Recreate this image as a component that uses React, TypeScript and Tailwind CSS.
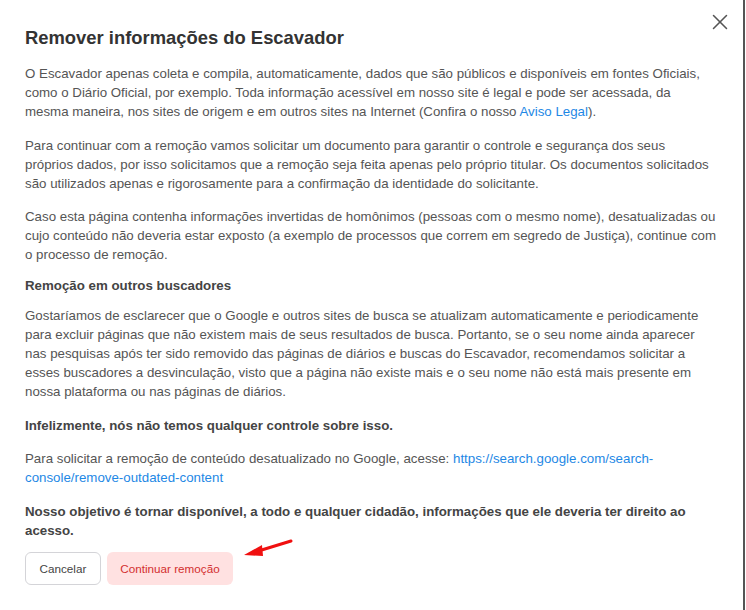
import { X } from "lucide-react";

const Modal = () => {
  return (
    <div className="relative h-[610px] w-[746px] overflow-hidden bg-white font-['Liberation_Sans',Arial,sans-serif]">
      <div className="absolute right-[1px] top-0 h-full w-[2px] bg-[#555]" />
      <button className="absolute right-[13px] top-[9px] text-[#555]">
        <X size={26} strokeWidth={1.4} />
      </button>
      <div className="pl-[25px] pt-[26px] pr-[30px]">
        <h2 className="text-[18.4px] font-bold leading-[23px] text-[#333]">
          Remover informações do Escavador
        </h2>
        <div className="mt-[15px] text-[13.3px] leading-[19px] text-[#555]">
          <p className="mb-[14.5px]">
            O Escavador apenas coleta e compila, automaticamente, dados que são
            públicos e disponíveis em fontes Oficiais, como o Diário Oficial,
            por exemplo. Toda informação acessível em nosso site é legal e pode
            ser acessada, da mesma maneira, nos sites de origem e em outros
            sites na Internet (Confira o nosso{" "}
            <a className="text-[#1e88e5]">Aviso Legal</a>).
          </p>
          <p className="mb-[14.5px]">
            Para continuar com a remoção vamos solicitar um documento para
            garantir o controle e segurança dos seus próprios dados, por isso
            solicitamos que a remoção seja feita apenas pelo próprio titular. Os
            documentos solicitados são utilizados apenas e rigorosamente para a
            confirmação da identidade do solicitante.
          </p>
          <p className="mr-[-3px] mb-[12px]">
            Caso esta página contenha informações invertidas de homônimos
            (pessoas com o mesmo nome), desatualizadas ou cujo conteúdo não
            deveria estar exposto (a exemplo de processos que correm em segredo
            de Justiça), continue com o processo de remoção.
          </p>
          <p className="mb-[11px] font-bold text-[#444]">
            Remoção em outros buscadores
          </p>
          <p className="mb-[14.5px]">
            Gostaríamos de esclarecer que o Google e outros sites de busca se
            atualizam automaticamente e periodicamente para excluir páginas que
            não existem mais de seus resultados de busca. Portanto, se o seu
            nome ainda aparecer nas pesquisas após ter sido removido das páginas
            de diários e buscas do Escavador, recomendamos solicitar a esses
            buscadores a desvinculação, visto que a página não existe mais e o
            seu nome não está mais presente em nossa plataforma ou nas páginas
            de diários.
          </p>
          <p className="mb-[14.5px] font-bold text-[#444]">
            Infelizmente, nós não temos qualquer controle sobre isso.
          </p>
          <p className="mb-[14.5px]">
            Para solicitar a remoção de conteúdo desatualizado no Google,
            acesse:{" "}
            <a className="text-[#1e88e5]">
              https://search.google.com/search-console/remove-outdated-content
            </a>
          </p>
          <p className="font-bold text-[#444]">
            Nosso objetivo é tornar disponível, a todo e qualquer cidadão,
            informações que ele deveria ter direito ao acesso.
          </p>
        </div>
        <div className="relative mt-[12.5px] flex items-center gap-[6px]">
          <button className="h-[33px] rounded-[6px] border border-[#d4d4d8] px-[13.5px] text-[11.7px] text-[#444]">
            Cancelar
          </button>
          <button className="h-[33px] rounded-[6px] bg-[#ffe1e1] px-[13.5px] text-[11.7px] text-[#d32f2f]">
            Continuar remoção
          </button>
          <svg width="60" height="25" viewBox="0 0 60 25" className="absolute left-[215px] top-[-16px]">
            <path d="M51 5 L20 14.5" stroke="#f01010" strokeWidth="3" strokeLinecap="round" />
            <path d="M4 19 L22 9 L23 20 Z" fill="#f01010" />
          </svg>
        </div>
      </div>
    </div>
  );
};

export default function App() {
  return <Modal />;
}
